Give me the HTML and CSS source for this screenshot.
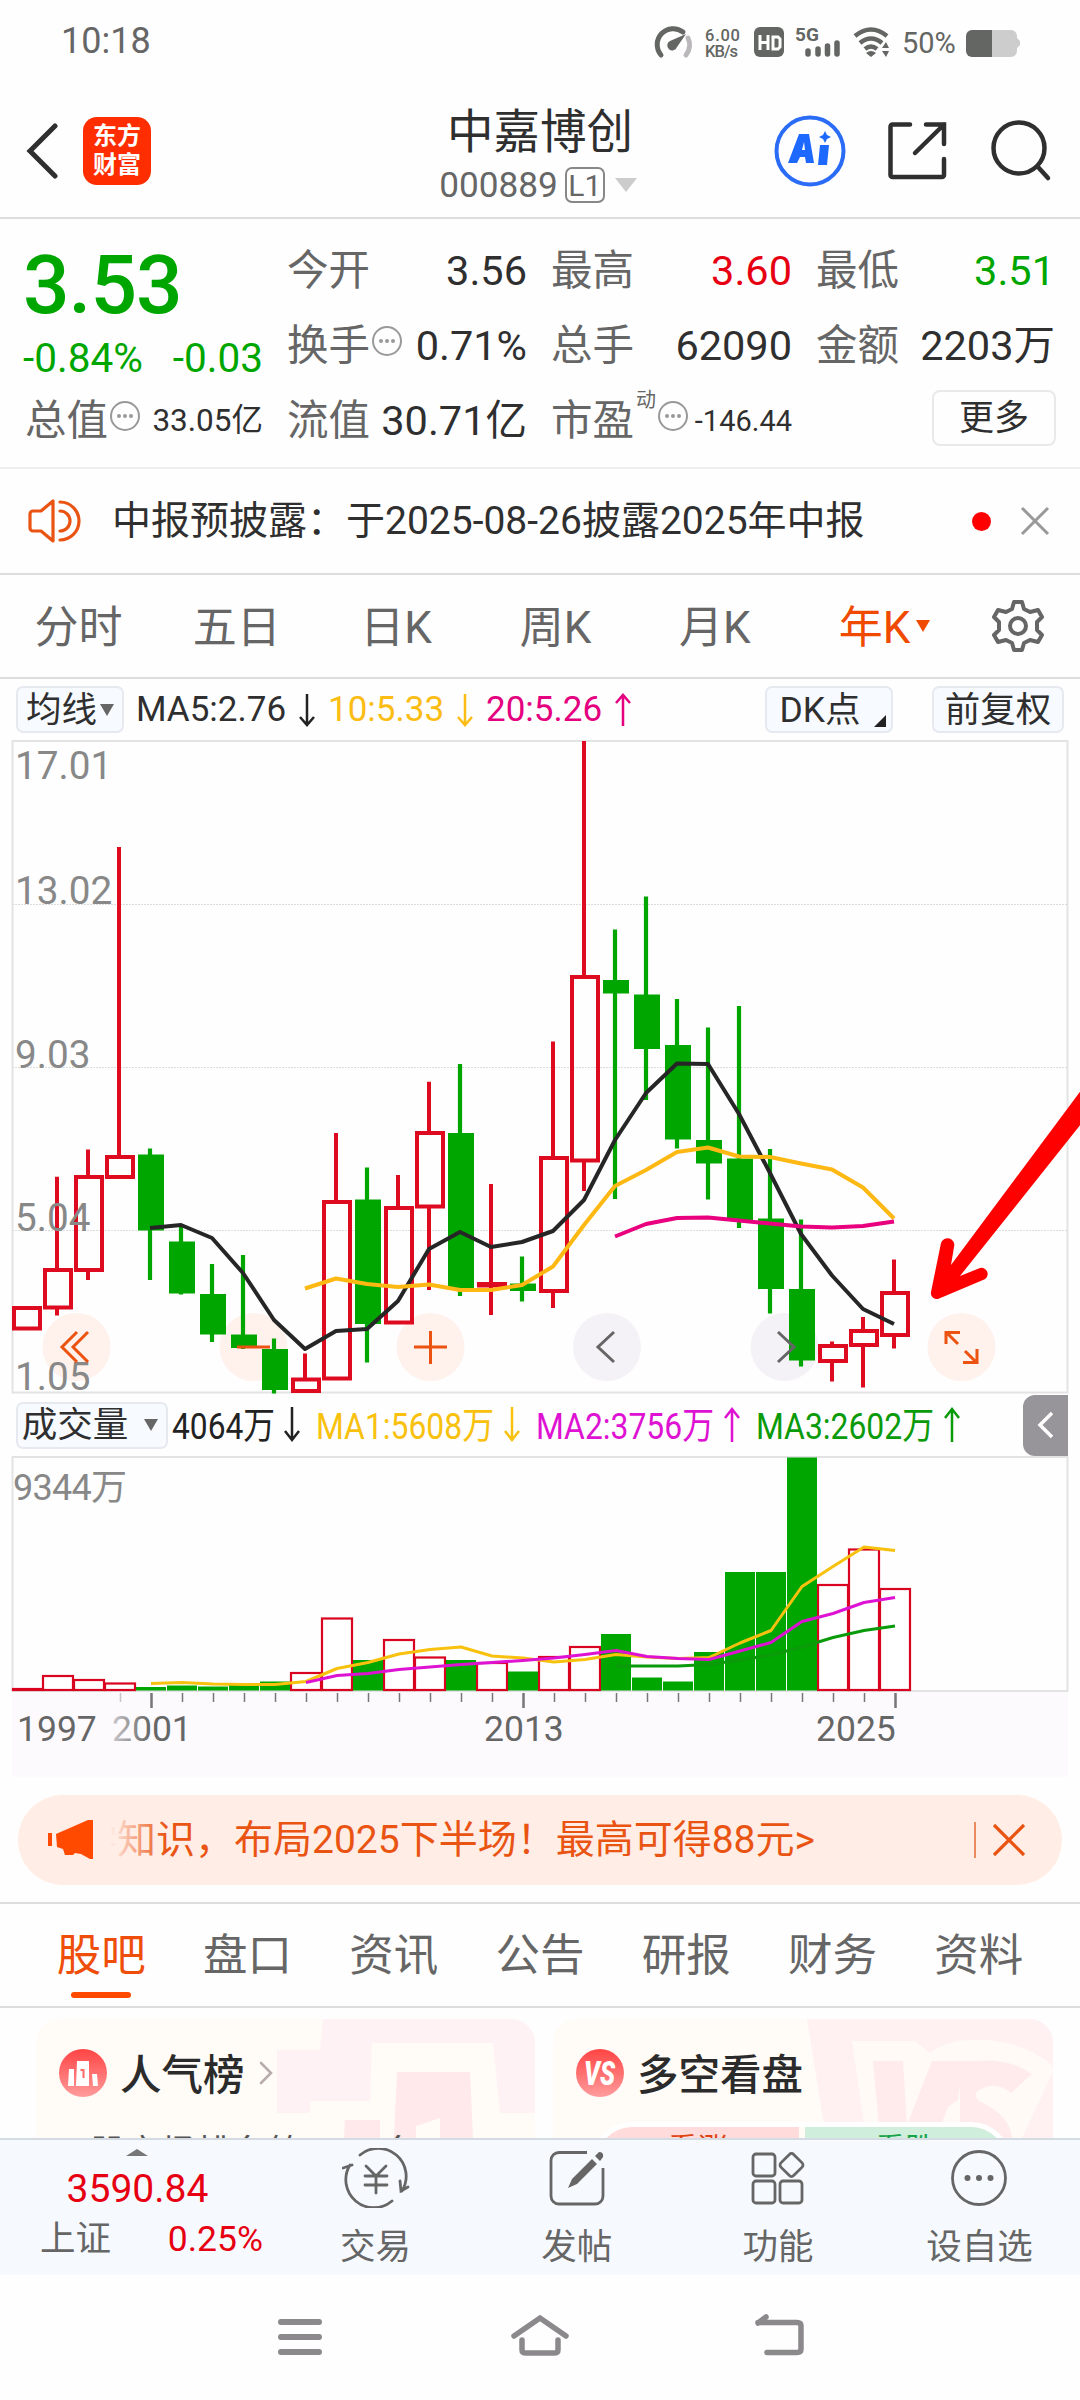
FILE: index.html
```
<!DOCTYPE html>
<html lang="zh-CN">
<head>
    <meta charset="utf-8">
    <title>中嘉博创 000889</title>
    <link rel="stylesheet" href="styles.css">
</head>
<body>
    <div class="status-bar">
        <span class="clock">10:18</span>
        <svg class="status-icons" width="385" height="44" viewBox="650 20 385 44">
            <path d="M661 55 A16 16 0 0 1 683 32" fill="none" stroke="#636663" stroke-width="5" stroke-linecap="round"/>
            <path d="M688 38 A16 16 0 0 1 686 55" fill="none" stroke="#bbb8bb" stroke-width="5" stroke-linecap="round"/>
            <path d="M686 34 L677 47 A5 5 0 1 1 670 41 Z" fill="#636663"/>
            <text class="st-speed" x="705" y="40.5" textLength="35">6.00</text>
            <text class="st-speed" x="705" y="56.5" textLength="33">KB/s</text>
            <rect x="754" y="27" width="30" height="30" rx="6" fill="#636663"/>
            <path d="M760 35v15M768 35v15M760 42.5h8M773 37h5l2 2v8l-2 2h-5z" fill="none" stroke="#fff" stroke-width="3"/>
            <text class="st-5g" x="795" y="41">5G</text>
            <path d="M808 51v3M818 49v5M827.5 46v8M837 43v11" stroke="#636663" stroke-width="5.5" stroke-linecap="round"/>
            <path d="M855 36 Q871 23 887 36M860 43 Q871 34 882 43M865 49 Q871 44 877 49" fill="none" stroke="#636663" stroke-width="4.5"/>
            <path d="M866 53 Q871 49 876 53 L871 57z M882 48l4-6 3 6z M882 51h7l-3 6z" fill="#636663"/>
            <text class="st-pct" x="902" y="53">50%</text>
            <path d="M973 30h38a6 6 0 0 1 6 6v2l3 3v4l-3 3v3a6 6 0 0 1-6 6h-38z" fill="#cdcdcd"/>
            <path d="M992 30h-20a6 6 0 0 0-6 6v15a6 6 0 0 0 6 6h20z" fill="#636663"/>
        </svg>
    </div>

    <div class="header">
        <div class="header-side">
            <svg class="back" width="32" height="58" viewBox="0 0 32 58"><path d="M29 4 L4 29 L29 54" fill="none" stroke="#2f2f2f" stroke-width="5" stroke-linecap="round"/></svg>
            <div class="logo">东方<br>财富</div>
        </div>
        <div class="stock">
            <div class="stock-name">中嘉博创</div>
            <div class="stock-code">000889<span class="level">L1</span><i class="tri-down"></i></div>
        </div>
        <div class="header-side right">
            <svg width="72" height="72" viewBox="0 0 72 72">
                <circle cx="36" cy="36" r="33.500" fill="none" stroke="#2b6cf6" stroke-width="4"/>
                <path d="M25 19h10l5 29h-8l-1-6h-5l-3 6h-9z M28 35h3l-1-8z M46 30h9l-2 20h-9z M51 16l2 4 4 2-4 2-2 4-2-4-4-2 4-2z" fill="#1d68ff" fill-rule="evenodd"/>
            </svg>
            <svg width="62" height="62" viewBox="0 0 62 62" fill="none" stroke="#2f2f2f" stroke-width="4.5" stroke-linecap="round">
                <path d="M24 4.500H6.500a2 2 0 0 0-2 2V55a2 2 0 0 0 2 2H56a2 2 0 0 0 2-2V39M40 4.500h18V24M58 4.500L29 33"/>
            </svg>
            <svg width="62" height="62" viewBox="0 0 62 62" fill="none" stroke="#2f2f2f" stroke-width="4.5" stroke-linecap="round">
                <circle cx="29" cy="28" r="25.5"/><path d="M48 47L58 58"/>
            </svg>
        </div>
    </div>

    <div class="quote">
        <div class="quote-col first">
            <div class="price">3.53</div>
            <div class="change"><span>-0.84%</span><span>-0.03</span></div>
            <div class="cell"><span class="k">总值</span><i class="more-dot"></i><span class="v s31">33.05亿</span></div>
        </div>
        <div class="quote-col">
            <div class="cell"><span class="k">今开</span><span class="v">3.56</span></div>
            <div class="cell"><span class="k">换手</span><i class="more-dot"></i><span class="v">0.71%</span></div>
            <div class="cell"><span class="k">流值</span><span class="v">30.71亿</span></div>
        </div>
        <div class="quote-col">
            <div class="cell"><span class="k">最高</span><span class="v red">3.60</span></div>
            <div class="cell"><span class="k">总手</span><span class="v">62090</span></div>
            <div class="cell"><span class="k">市盈</span><sup>动</sup><i class="more-dot"></i><span class="v s29">-146.44</span></div>
        </div>
        <div class="quote-col">
            <div class="cell"><span class="k">最低</span><span class="v green">3.51</span></div>
            <div class="cell"><span class="k">金额</span><span class="v">2203万</span></div>
            <div class="cell"><span class="more-btn">更多</span></div>
        </div>
    </div>

    <div class="notice">
        <svg width="54" height="46" viewBox="0 0 54 46" fill="none" stroke="#ea5413" stroke-width="3.2" stroke-linejoin="round">
            <path d="M25 3v40L13 33H5a3 3 0 0 1-3-3V16a3 3 0 0 1 3-3h8z"/>
            <path d="M32 13a10 10 0 0 1 0 20M32 4a19 19 0 0 1 0 38" stroke-linecap="round"/>
        </svg>
        <span class="notice-text">中报预披露：于2025-08-26披露2025年中报</span>
        <i class="red-dot"></i>
        <svg width="32" height="32" viewBox="0 0 32 32"><path d="M3 3L29 29M29 3L3 29" stroke="#999" stroke-width="3"/></svg>
    </div>

    <div class="periods">
        <span>分时</span><span>五日</span><span>日K</span><span>周K</span><span>月K</span><span class="active">年K<i class="tri-down"></i></span>
        <svg width="56" height="56" viewBox="0 0 56 56" fill="none" stroke="#666" stroke-width="4" stroke-linejoin="round">
            <path d="M24 4h8l2 7 6 3 8-2 4 7-5 5v8l5 5-4 7-8-2-6 3-2 7h-8l-2-7-6-3-8 2-4-7 5-5v-8l-5-5 4-7 8 2 6-3z"/>
            <circle cx="28" cy="28" r="8"/>
        </svg>
    </div>

    <div class="ma-bar">
        <span class="chip">均线<i class="tri-down"></i></span>
        <span class="ma ma5">MA5:2.76</span>
        <svg class="arrow" width="18" height="34" viewBox="0 0 18 34"><path d="M9 1v31M2 24l7 8 7-8" stroke="#222"/></svg>
        <span class="ma ma10">10:5.33</span>
        <svg class="arrow" width="18" height="34" viewBox="0 0 18 34"><path d="M9 1v31M2 24l7 8 7-8" stroke="#fbbc14"/></svg>
        <span class="ma ma20">20:5.26</span>
        <svg class="arrow" width="18" height="34" viewBox="0 0 18 34"><path d="M9 33V2M2 10l7-8 7 8" stroke="#e4007f"/></svg>
        <span class="chip dk">DK点</span>
        <span class="chip fq">前复权</span>
    </div>

    <svg class="chart" width="1080" height="654" viewBox="0 740 1080 654">
        <path class="frame" d="M12.5 741H1067.5V1392.5H12.5Z"/>
        <path class="grid" d="M12 904.5H1067M12 1067.5H1067M12 1230.5H1067"/>

        <!-- control buttons -->
        <g class="btn-bg"><circle cx="76.5" cy="1347" r="34"/><circle cx="253.5" cy="1347" r="34"/><circle cx="430.5" cy="1347" r="34"/><circle cx="961.5" cy="1347" r="34"/></g>
        <g class="btn-bg grey"><circle cx="607" cy="1347" r="34"/><circle cx="784.5" cy="1347" r="34"/></g>

        <!-- rising years -->
        <path class="up" d="M57 1176.7V1268M57 1308V1315.5M88 1149.5V1175M88 1272V1280M119 847V1156M305 1353.6V1378M336 1133V1200M398 1175V1206M429 1081.7V1131M429 1208V1290M491 1184V1315M553 1041.5V1156M553 1292V1308M584 741V975M584 1162V1191M832 1341.5V1345M832 1362V1381.5M863 1317V1330M863 1346V1387.5M894 1259.5V1291M894 1336V1348.5"/>
        <g class="up">
            <rect x="14" y="1308" width="26" height="20.5"/>
            <rect x="45" y="1270" width="26" height="37.5"/>
            <rect x="76" y="1177" width="26" height="93"/>
            <rect x="107" y="1157" width="26" height="20"/>
            <rect x="293" y="1379.5" width="26" height="11.5"/>
            <rect x="324" y="1202" width="26" height="176.5"/>
            <rect x="386" y="1208" width="26" height="114.5"/>
            <rect x="417" y="1133" width="26" height="73.5"/>
            <rect x="479" y="1284" width="26" height="1.5"/>
            <rect x="541" y="1158" width="26" height="133"/>
            <rect x="572" y="977" width="26" height="183.5"/>
            <rect x="820" y="1346" width="26" height="15"/>
            <rect x="851" y="1331" width="26" height="14"/>
            <rect x="882" y="1293" width="26" height="42"/>
        </g>

        <!-- falling years -->
        <path class="down-wick" d="M150 1148.5V1280M181 1226.5V1294.5M212 1264V1342M243 1255V1349M274 1338.5V1393.5M367 1167.5V1362.5M460 1064V1296M522 1256.5V1301.5M615 929.5V1199M646 896.5V1100M677 999V1148.5M708 1027.5V1199.5M739 1006V1228M770 1149V1313.5M801 1219.5V1366.5"/>
        <g class="down">
            <rect x="138" y="1154.5" width="26" height="76"/>
            <rect x="169" y="1241.5" width="26" height="52"/>
            <rect x="200" y="1294" width="26" height="40.5"/>
            <rect x="231" y="1334.5" width="26" height="13.5"/>
            <rect x="262" y="1349" width="26" height="41"/>
            <rect x="355" y="1199.5" width="26" height="124.5"/>
            <rect x="448" y="1133" width="26" height="155"/>
            <rect x="510" y="1283.5" width="26" height="7.5"/>
            <rect x="603" y="980" width="26" height="13.5"/>
            <rect x="634" y="994.5" width="26" height="54.5"/>
            <rect x="665" y="1045" width="26" height="94.5"/>
            <rect x="696" y="1140" width="26" height="23.5"/>
            <rect x="727" y="1158.5" width="26" height="61.5"/>
            <rect x="758" y="1218.5" width="26" height="70.5"/>
            <rect x="789" y="1289" width="26" height="71.5"/>
        </g>

        <g class="line">
            <polyline stroke="#262626" points="150,1228 181,1225 212,1238 243,1273 274,1320 305,1349 336,1331 367,1329 398,1301 429,1249 460,1232 491,1247 522,1242 553,1231 584,1200 615,1140 646,1093 677,1063.5 708,1064 739,1114 770,1173 801,1234 832,1275.5 863,1309 894,1324"/>
            <polyline stroke="#fdb813" points="305,1288.5 336,1278.5 367,1284 398,1287 429,1284.5 460,1290 491,1290 522,1285 553,1266.5 584,1225 615,1186 646,1170 677,1152 708,1147.5 739,1156.5 770,1157 801,1163.5 832,1169.5 863,1187.5 894,1218.5"/>
            <polyline stroke="#e8007f" points="615,1236.5 646,1224 677,1218 708,1217.5 739,1220.5 770,1223.5 801,1226.5 832,1227.5 863,1226 894,1221.5"/>
        </g>

        <g class="axis-price">
            <text x="15" y="778.5">17.01</text>
            <text x="15" y="903.5">13.02</text>
            <text x="15" y="1067.5">9.03</text>
            <text x="15" y="1230.5">5.04</text>
            <text x="15" y="1389.5">1.05</text>
        </g>

        <g fill="none" stroke="#ec5310" stroke-width="3">
            <path d="M77 1332L62 1347L77 1362M88 1332L73 1347L88 1362"/>
            <path d="M237 1347H270M414 1347H447M430.5 1331V1364"/>
            <path d="M946 1344V1332.5H960M947 1333L958 1344M977 1349V1362.5H963M976 1362L965 1351"/>
            <path d="M614 1332L598 1347L614 1362M778 1332L794 1347L778 1362" stroke="#666"/>
        </g>

        <path d="M1085 1085L951 1265L954 1247A6 6 0 0 0 941 1243L931 1292A6 6 0 0 0 938 1299L983 1280A6 6 0 0 0 980 1268L960 1276L1085 1119Z" fill="#fe0000"/>
    </svg>

    <div class="vol-bar">
        <span class="chip">成交量<i class="tri-down"></i></span>
        <svg class="vol-values" width="800" height="50" viewBox="170 1400 800 50">
            <text x="172" y="1439" textLength="103" lengthAdjust="spacingAndGlyphs" fill="#222">4064万</text>
            <text x="316" y="1439" textLength="178" lengthAdjust="spacingAndGlyphs" fill="#f8c10e">MA1:5608万</text>
            <text x="536" y="1439" textLength="178" lengthAdjust="spacingAndGlyphs" fill="#de12d2">MA2:3756万</text>
            <text x="756" y="1439" textLength="178" lengthAdjust="spacingAndGlyphs" fill="#0a9a0a">MA3:2602万</text>
            <g fill="none" stroke-width="2.5">
                <path stroke="#222" d="M292 1407V1440M285 1431l7 9 7-9"/>
                <path stroke="#f8c10e" d="M512 1407V1440M505 1431l7 9 7-9"/>
                <path stroke="#de12d2" d="M732 1442V1409M725 1418l7-9 7 9"/>
                <path stroke="#0a9a0a" d="M952 1442V1409M945 1418l7-9 7 9"/>
            </g>
        </svg>
        <span class="collapse"><svg width="20" height="30" viewBox="0 0 20 30"><path d="M16 3L4 15L16 27" fill="none" stroke="#fff" stroke-width="3.5"/></svg></span>
    </div>

    <svg class="chart" width="1080" height="322" viewBox="0 1456 1080 322">
        <rect x="12" y="1692" width="1056" height="85" fill="#fdfafe"/>
        <path class="frame" d="M12.5 1457H1067.5V1691H12.5Z"/>
        <text class="axis-vol" x="13" y="1500" textLength="114">9344万</text>

        <g class="vol-up">
            <rect x="13" y="1689" width="30" height="1"/>
            <rect x="43" y="1676" width="30" height="14"/>
            <rect x="74" y="1680" width="30" height="10"/>
            <rect x="105" y="1683.5" width="30" height="6.5"/>
            <rect x="291" y="1673" width="30" height="17"/>
            <rect x="322" y="1618.5" width="30" height="71.5"/>
            <rect x="384" y="1640" width="30" height="50"/>
            <rect x="415" y="1657.5" width="30" height="32.5"/>
            <rect x="477" y="1663" width="30" height="27"/>
            <rect x="539" y="1657" width="30" height="33"/>
            <rect x="570" y="1647" width="30" height="43"/>
            <rect x="818" y="1585" width="30" height="105"/>
            <rect x="849" y="1549.5" width="30" height="140.5"/>
            <rect x="880" y="1589" width="30" height="101"/>
        </g>
        <g class="down">
            <rect x="136" y="1687" width="30" height="3.5"/>
            <rect x="167" y="1685.5" width="30" height="5"/>
            <rect x="198" y="1686.5" width="30" height="4"/>
            <rect x="229" y="1683" width="30" height="7.5"/>
            <rect x="260" y="1681.5" width="30" height="9"/>
            <rect x="353" y="1660" width="30" height="30.5"/>
            <rect x="446" y="1660" width="30" height="30.5"/>
            <rect x="508" y="1671.5" width="30" height="19"/>
            <rect x="601" y="1634" width="30" height="56.5"/>
            <rect x="632" y="1677.5" width="30" height="13"/>
            <rect x="663" y="1681.5" width="30" height="9"/>
            <rect x="694" y="1652" width="30" height="38.5"/>
            <rect x="725" y="1572" width="30" height="118.5"/>
            <rect x="756" y="1572" width="30" height="118.5"/>
            <rect x="787" y="1457.5" width="30" height="233"/>
        </g>

        <g class="line thin">
            <polyline stroke="#0a9a0a" points="616,1666 647,1666 678,1666 709,1664.5 740,1660 771,1655 802,1647 833,1637.5 864,1630.5 895,1626"/>
            <polyline stroke="#f8c10e" points="151,1683.5 182,1682.5 213,1684 244,1684.5 275,1684.5 306,1681.5 337,1668.5 368,1662.5 399,1654 430,1649.5 461,1647 492,1656 523,1658 554,1662 585,1659.5 616,1654.5 647,1657 678,1658.5 709,1657.5 740,1643 771,1630.5 802,1586.5 833,1566.5 864,1547 895,1550.5"/>
            <polyline stroke="#de12d2" points="306,1682.5 337,1675.5 368,1673.5 399,1669.5 430,1667 461,1664.5 492,1662.5 523,1660.5 554,1658 585,1654.5 616,1650.5 647,1656.5 678,1658.5 709,1659.5 740,1651 771,1642.5 802,1621.5 833,1613.5 864,1602.5 895,1597.5"/>
        </g>

        <path class="tick" d="M182.5 1693V1702M213.5 1693V1702M244.5 1693V1702M275.5 1693V1702M306.5 1693V1702M337.5 1693V1702M368.5 1693V1702M399.5 1693V1702M430.5 1693V1702M461.5 1693V1702M492.5 1693V1702M554.5 1693V1702M585.5 1693V1702M616.5 1693V1702M647.5 1693V1702M678.5 1693V1702M709.5 1693V1702M740.5 1693V1702M771.5 1693V1702M802.5 1693V1702M833.5 1693V1702M864.5 1693V1702"/>
        <path class="tick" d="M120.5 1693V1702" opacity=".4"/>
        <path class="tick major" d="M151.5 1693V1708M523.5 1693V1708M895.5 1693V1708"/>
        <defs>
            <linearGradient id="fade" gradientUnits="userSpaceOnUse" x1="104" x2="150" y1="0" y2="0"><stop offset="0" stop-color="#666" stop-opacity=".2"/><stop offset="1" stop-color="#666"/></linearGradient>
        </defs>
        <g class="axis-year">
            <text x="17" y="1740.5">1997</text>
            <text x="112" y="1740.5" fill="url(#fade)">2001</text>
            <text x="484" y="1740.5">2013</text>
            <text x="816" y="1740.5">2025</text>
        </g>
    </svg>

    <div class="promo">
        <svg width="46" height="40" viewBox="0 0 46 40"><path d="M0 13h4v13H0zM8 14L40 0h5v39h-3L33 34l-6-1-2 2H17l-2-6-6-2z" fill="#ff4a00"/></svg>
        <div class="promo-text"><span>学知识，布局2025下半场！最高可得88元&gt;</span></div>
        <i class="promo-sep"></i>
        <svg width="34" height="34" viewBox="0 0 34 34"><path d="M2 2L32 32M32 2L2 32" stroke="#ea5413" stroke-width="3.2"/></svg>
    </div>

    <div class="sections">
        <span class="active">股吧</span><span>盘口</span><span>资讯</span><span>公告</span><span>研报</span><span>财务</span><span>资料</span>
    </div>

    <div class="cards">
        <div class="card">
            <svg class="card-bg" width="499" height="119" viewBox="36 2019 499 119">
                <path d="M323 2019H535V2113H500L493 2043H372L370 2101H310V2113H277V2050H320Z" fill="#fff2f4"/>
                <path d="M397 2072H470L473 2138H440V2118L416 2126V2138H344L345 2120H380V2138H394Z" fill="#ffe9ea"/>
            </svg>
            <div class="card-title">
                <svg width="48" height="48" viewBox="0 0 48 48">
                    <defs><linearGradient id="badge" x1="0" x2="0" y1="0" y2="1"><stop offset="0" stop-color="#f44"/><stop offset="1" stop-color="#ff9c9c"/></linearGradient></defs>
                    <circle cx="24" cy="24" r="24" fill="url(#badge)"/>
                    <path d="M10 20h5v17H9zM18 12h12v25H17zM33 25h5l1 12h-5z" fill="#fff"/>
                    <path d="M21.5 21h3v8" fill="none" stroke="#f66" stroke-width="2"/>
                </svg>
                <b>人气榜</b>
                <svg class="go" width="14" height="24" viewBox="0 0 14 24"><path d="M2 2L12 12L2 22" fill="none" stroke="#b8adad" stroke-width="2.6" stroke-linecap="round"/></svg>
            </div>
            <p class="rank">A股市场排名第<em>2404</em>名</p>
        </div>
        <div class="card">
            <svg class="card-bg" width="500" height="119" viewBox="553 2019 500 119">
                <path d="M807 2019H1053V2138H826Z" fill="#fff1f2"/>
                <path d="M852 2041H915L930 2053Q948 2038 985 2040Q1025 2042 1053 2066V2072L1022 2138H866Z" fill="#fffaf6"/>
                <path d="M873 2061H903L907 2125L932 2061H974Q960 2070 958 2100L948 2107L936 2138H880ZM974 2061Q1010 2058 1032 2074L1011 2093Q998 2083 986 2087Q970 2092 979 2101Q1010 2115 1012 2138H960V2100Q958 2070 974 2061Z" fill="#ffebec"/>
            </svg>
            <div class="card-title">
                <svg width="48" height="48" viewBox="0 0 48 48">
                    <circle cx="24" cy="24" r="24" fill="url(#badge)"/>
                    <text class="vs" x="8" y="36" textLength="31" lengthAdjust="spacingAndGlyphs">VS</text>
                </svg>
                <b>多空看盘</b>
            </div>
            <div class="vote"><span class="bull">看涨</span><span class="bear">看跌</span></div>
        </div>
    </div>

    <div class="toolbar">
        <div class="index">
            <i class="tri-up"></i>
            <div class="index-value">3590.84</div>
            <div class="index-row"><span>上证</span><span class="red">0.25%</span></div>
        </div>
        <div class="tool">
            <svg width="68" height="60" viewBox="0 0 68 60" fill="none" stroke="#666" stroke-width="2.8" stroke-linecap="round">
                <path d="M18 7A28 28 0 0 1 60 43M58 33L59 43L66 39M50 53A28 28 0 0 1 8 17M1 20L10 17"/>
                <path d="M24 18L34 28L44 18M34 28V45M23 28H45M23 37H45"/>
            </svg>
            <span>交易</span>
        </div>
        <div class="tool">
            <svg width="60" height="60" viewBox="0 0 60 60" fill="none" stroke="#666" stroke-width="2.8">
                <path d="M40 4.5H12a8 8 0 0 0-8 8V48a8 8 0 0 0 8 8H48a8 8 0 0 0 8-8V20"/>
                <path d="M45 11L50 16L30 36L21 40L25 31ZM48 8L52 4Q57 4 56 9L53 13Z" fill="#666" stroke="none"/>
            </svg>
            <span>发帖</span>
        </div>
        <div class="tool">
            <svg width="60" height="60" viewBox="0 0 60 60" fill="none" stroke="#666" stroke-width="2.8">
                <rect x="5" y="6" width="22" height="22" rx="3"/>
                <rect x="5" y="33" width="22" height="22" rx="3"/>
                <rect x="32" y="33" width="22" height="22" rx="3"/>
                <rect x="34.5" y="8" width="18" height="18" rx="3" transform="rotate(45 43.5 17)"/>
            </svg>
            <span>功能</span>
        </div>
        <div class="tool">
            <svg width="60" height="60" viewBox="0 0 60 60">
                <circle cx="30" cy="30" r="26.5" fill="none" stroke="#666" stroke-width="2.8"/>
                <g fill="#666"><circle cx="18.5" cy="30" r="3"/><circle cx="30" cy="30" r="3"/><circle cx="41.5" cy="30" r="3"/></g>
            </svg>
            <span>设自选</span>
        </div>
    </div>

    <div class="sys-nav">
        <svg width="60" height="48" viewBox="0 0 60 48"><path d="M11 9H49M11 24H49M11 39H49" stroke="#8c898c" stroke-width="6" stroke-linecap="round"/></svg>
        <svg width="60" height="48" viewBox="0 0 60 48"><path d="M4 23L30 5L56 23M12 27V37Q12 40 16 40H44Q48 40 48 37V27" fill="none" stroke="#8c898c" stroke-width="5.5" stroke-linecap="round"/></svg>
        <svg width="60" height="48" viewBox="0 0 60 48"><path d="M8 9.5H47Q51 9.5 51 13V36Q51 39.5 47 39.5H17M8 10L16 4" fill="none" stroke="#8c898c" stroke-width="5.5" stroke-linecap="round"/></svg>
    </div>
</body>
</html>
```

FILE: styles.css
```
* {
    box-sizing: border-box;
}
body {
    margin: 0;
    width: 1080px;
    height: 2400px;
    overflow: hidden;
    background: #fefefe;
    color: #2f2f2f;
    font-family: Roboto, "Noto Sans CJK SC", sans-serif;
}
svg {
    display: block;
    flex: none;
}
.red {
    color: #e60012 !important;
}
.green {
    color: #00a600 !important;
}
.tri-down {
    display: inline-block;
    border: 8px solid transparent;
    border-top: 14px solid #666;
    border-bottom: 0;
}

/* status bar */
.status-bar {
    display: flex;
    justify-content: space-between;
    height: 84px;
    padding: 20px 45px 0 61px;
    color: #666;
}
.clock {
    font-size: 36px;
    line-height: 43px;
}
.st-speed {
    font-size: 16.5px;
    font-weight: 500;
    fill: #636663;
}
.st-5g {
    font-size: 19px;
    font-weight: 700;
    fill: #636663;
}
.st-pct {
    font-size: 29px;
    fill: #636663;
}

/* header */
.header {
    display: flex;
    justify-content: space-between;
    height: 135px;
    border-bottom: 2px solid #ddd;
}
.header-side {
    display: flex;
    width: 330px;
    height: 134px;
    padding-left: 26px;
    align-items: center;
}
.header-side.right {
    padding: 0 28px 0 0;
    justify-content: flex-end;
    gap: 40px;
}
.header-side.right svg:last-child {
    margin-left: 2px;
}
.logo {
    width: 68px;
    height: 68px;
    margin-left: 25px;
    padding-top: 5px;
    border-radius: 14px;
    background: #ff2d00;
    color: #fff;
    font-size: 24px;
    font-weight: 700;
    line-height: 29px;
    text-align: center;
}
.stock {
    text-align: center;
}
.stock-name {
    height: 77px;
    padding-top: 13px;
    font-size: 46.5px;
    line-height: 70px;
}
.stock-code {
    display: flex;
    align-items: center;
    justify-content: center;
    height: 48px;
    padding-right: 4px;
    color: #666;
    font-size: 35.2px;
}
.level {
    width: 40px;
    height: 36px;
    margin-left: 7px;
    border: 2px solid #888;
    border-radius: 7px;
    font-size: 30px;
    line-height: 33px;
}
.stock-code .tri-down {
    margin-left: 10px;
    border-width: 14px 11px 0;
    border-top-color: #ccc;
}

/* quote */
.quote {
    display: grid;
    grid-template-columns: 236px 238px 239px 237px;
    column-gap: 26px;
    height: 250px;
    padding: 14px 0 0 26px;
    border-bottom: 2px solid #eee;
}
.cell {
    display: flex;
    align-items: center;
    height: 75px;
    line-height: 60px;
    white-space: nowrap;
}
.k {
    margin-left: -1px;
    color: #666;
    font-size: 41.5px;
}
.v {
    margin-right: -1px;
    margin-left: auto;
    font-size: 41.5px;
}
.s31 {
    font-size: 31.5px;
}
.s29 {
    font-size: 29px;
}
.cell sup {
    align-self: flex-start;
    margin: 2px 0 0 2px;
    color: #666;
    font-size: 20px;
    line-height: 30px;
}
.more-dot {
    display: flex;
    flex: none;
    align-items: center;
    justify-content: center;
    width: 30px;
    height: 30px;
    margin: -10px 0 0 2px;
    border: 2px solid #999;
    border-radius: 50%;
}
.more-dot::before {
    content: "";
    width: 4px;
    height: 4px;
    border-radius: 50%;
    background: #999;
    box-shadow: -6px 0 #999, 6px 0 #999;
}
.price {
    height: 86px;
    margin-left: -3px;
    color: #00a600;
    font-size: 82px;
    font-weight: 500;
    line-height: 104px;
    letter-spacing: -1px;
}
.change {
    display: flex;
    justify-content: space-between;
    height: 64px;
    margin: 0 -1px 0 -3px;
    color: #00a600;
    font-size: 40.5px;
    line-height: 79px;
}
.more-btn {
    width: 124px;
    height: 56px;
    margin: -6px -2px 0 auto;
    border: 2px solid #eae8ea;
    border-radius: 8px;
    font-size: 35px;
    line-height: 53px;
    text-align: center;
}

/* notice */
.notice {
    display: flex;
    align-items: center;
    height: 106px;
    padding: 0 29px 0 28px;
    border-bottom: 2px solid #ddd;
}
.notice-text {
    flex: 1;
    margin-left: 30px;
    font-size: 39px;
    line-height: 50px;
}
.red-dot {
    width: 19px;
    height: 19px;
    margin-right: 28px;
    border-radius: 50%;
    background: #f00;
}

/* period tabs */
.periods {
    display: flex;
    align-items: center;
    height: 104px;
    border-bottom: 2px solid #ddd;
    color: #666;
    font-size: 44px;
    line-height: 56px;
}
.periods span {
    width: 159.4px;
    padding-top: 4px;
    margin-right: 0;
    text-align: center;
}
.periods span:first-child {
    width: 157px;
}
.periods .active {
    width: 180px;
    color: #f04a00;
}
.periods .tri-down {
    margin: 0 0 11px 6px;
    border-width: 12px 7px 0;
    border-top-color: #f04a00;
}
.periods svg {
    margin-left: 15px;
}

/* indicator rows */
.ma-bar {
    display: flex;
    align-items: center;
    height: 61px;
    padding: 0 16px;
    font-size: 35px;
}
.chip {
    display: flex;
    align-items: center;
    justify-content: center;
    height: 47px;
    border: 2px solid #e6eaf0;
    border-radius: 7px;
    background: #f7fbff;
    font-size: 35.5px;
    line-height: 42px;
    white-space: nowrap;
}
.ma-bar .chip {
    width: 108px;
}
.chip .tri-down {
    margin-left: 3px;
    border-width: 12px 7px 0;
}
.ma {
    width: 150px;
    margin-left: 12px;
}
.ma10, .ma20 {
    width: 116px;
    color: #fbbc14;
}
.ma20 {
    color: #e4007f;
}
.arrow {
    margin-left: 12px;
    fill: none;
    stroke-width: 2.5px;
}
.ma-bar .dk {
    position: relative;
    width: 128px;
    margin-left: auto;
    padding-right: 18px;
}
.dk::after {
    content: "";
    position: absolute;
    right: 5px;
    bottom: 4px;
    border: 6px solid #222;
    border-top-color: transparent;
    border-left-color: transparent;
}
.ma-bar .fq {
    width: 132px;
    margin-left: 39px;
}
.vol-bar {
    display: flex;
    align-items: center;
    height: 62px;
    padding: 0 12px 0 16px;
}
.vol-bar .chip {
    width: 152px;
    padding-right: 4px;
}
.vol-bar .tri-down {
    margin-left: 16px;
}
.vol-values {
    margin-left: 2px;
    font-size: 37px;
}
.collapse {
    display: flex;
    align-items: center;
    justify-content: center;
    width: 45px;
    height: 61px;
    margin-left: auto;
    border-radius: 12px 0 0 12px;
    background: #979599;
}

/* charts */
.frame {
    fill: none;
    stroke: #e3e3e3;
    stroke-width: 2;
}
.grid {
    stroke: #dcdcdc;
    stroke-width: 1;
    stroke-dasharray: 2 1;
}
.up {
    fill: none;
    stroke: #dd0a20;
    stroke-width: 4;
}
.down {
    fill: #00a600;
}
.down-wick {
    stroke: #00a600;
    stroke-width: 4.2;
}
.vol-up {
    fill: #fff;
    stroke: #d9041f;
    stroke-width: 2.2;
}
.line {
    fill: none;
    stroke-width: 4;
    stroke-linejoin: round;
}
.line.thin {
    stroke-width: 3;
}
.btn-bg {
    fill: #fff1ec;
}
.btn-bg.grey {
    fill: #f5f2f7;
}
.axis-price {
    font-size: 38.7px;
    fill: #888;
}
.axis-vol {
    font-size: 36px;
    fill: #888;
}
.axis-year {
    font-size: 35.5px;
    fill: #666;
}
.tick {
    stroke: #777;
    stroke-width: 1.5;
}
.tick.major {
    stroke-width: 2.5;
}

/* promo banner */
.promo {
    display: flex;
    align-items: center;
    height: 90px;
    margin: 17px 18px;
    padding: 0 36px 0 30px;
    border-radius: 45px;
    background: #ffede6;
    color: #ea5413;
}
.promo-text {
    position: relative;
    overflow: hidden;
    width: 864px;
    margin-left: 16px;
    font-size: 39px;
    line-height: 52px;
    white-space: nowrap;
}
.promo-text span {
    margin-left: -32px;
}
.promo-text::before {
    content: "";
    position: absolute;
    inset: 0 auto 0 0;
    width: 56px;
    background: linear-gradient(90deg, #ffede6, #ffede600);
}
.promo-sep {
    width: 2px;
    height: 36px;
    margin-right: 16px;
    background: #ea8a5e;
}

/* section tabs */
.sections {
    display: flex;
    height: 106px;
    padding: 0 28px;
    border: 2px solid #ddd;
    border-width: 2px 0;
    color: #666;
    font-size: 44.5px;
    line-height: 105px;
}
.sections span {
    flex: 1;
    position: relative;
    text-align: center;
}
.sections .active {
    color: #ee4d0a;
}
.sections .active::after {
    content: "";
    position: absolute;
    left: 43px;
    bottom: 8px;
    width: 60px;
    height: 6px;
    border-radius: 3px;
    background: #ff4a00;
}

/* cards */
.cards {
    display: grid;
    grid-template-columns: 499px 500px;
    gap: 18px;
    height: 130px;
    padding: 11px 36px 0;
    overflow: hidden;
}
.card {
    position: relative;
    height: 220px;
    border-radius: 24px;
    overflow: hidden;
    background: #fffbf7;
}
.card-bg {
    position: absolute;
    top: 0;
    left: 0;
}
.card-title {
    position: relative;
    display: flex;
    align-items: center;
    height: 108px;
    padding-left: 23px;
    color: #2b2b2b;
    font-size: 41.5px;
}
.card-title b {
    margin-left: 13px;
    padding-top: 6px;
    font-weight: 500;
    line-height: 50px;
}
.go {
    margin-left: 14px;
}
.vs {
    font-size: 34px;
    font-weight: 900;
    font-style: italic;
    fill: #fff;
}
.rank {
    position: relative;
    margin: 2px 0 0 31px;
    color: #555;
    font-size: 35.5px;
    line-height: 48px;
}
.rank em {
    color: #d9480f;
    font-style: normal;
}
.vote {
    position: relative;
    display: flex;
    gap: 6px;
    width: 419px;
    margin: -5px 0 0 39px;
    border: 5px solid #fff;
    border-radius: 40px;
}
.vote span {
    flex: 1;
    height: 70px;
    padding-top: 2px;
    border-radius: 35px 0 0 35px;
    background: #ffdcdb;
    color: #e0420f;
    font-size: 30px;
    line-height: 40px;
    text-align: center;
}
.vote .bear {
    border-radius: 0 35px 35px 0;
    background: #cfeedb;
    color: #16a34a;
}

/* bottom toolbar */
.toolbar {
    display: flex;
    height: 137px;
    border-top: 2px solid #d5dbe2;
    background: #f6faff;
    color: #666;
    font-size: 35.5px;
}
.index {
    display: flex;
    flex-direction: column;
    align-items: center;
    width: 275px;
    padding-top: 9px;
}
.tri-up {
    border: 11px solid transparent;
    border-top: 0;
    border-bottom: 7px solid #777;
}
.index-value {
    height: 53px;
    color: #e60012;
    font-size: 39px;
    line-height: 67px;
}
.index-row {
    display: flex;
    justify-content: space-between;
    align-self: flex-start;
    width: 223px;
    margin-left: 40px;
    line-height: 61px;
}
.tool {
    display: flex;
    flex-direction: column;
    align-items: center;
    width: 201.3px;
    padding-top: 8px;
}
.tool span {
    line-height: 79px;
}

/* system navigation */
.sys-nav {
    display: flex;
    justify-content: center;
    gap: 180px;
    padding-top: 38px;
}
```
